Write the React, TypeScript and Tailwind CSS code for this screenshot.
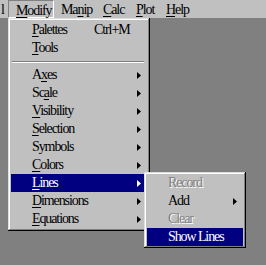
import React from 'react';

type Item = {
  label: string;
  ul?: number;
  shortcut?: string;
  sub?: boolean;
  active?: boolean;
  disabled?: boolean;
  sep?: boolean;
};

const mainItems: Item[] = [
  { label: 'Palettes', ul: 0, shortcut: 'Ctrl+M' },
  { label: 'Tools', ul: 0 },
  { label: '', sep: true },
  { label: 'Axes', ul: 1, sub: true },
  { label: 'Scale', ul: 2, sub: true },
  { label: 'Visibility', ul: 0, sub: true },
  { label: 'Selection', ul: 0, sub: true },
  { label: 'Symbols', sub: true },
  { label: 'Colors', ul: 0, sub: true },
  { label: 'Lines', ul: 0, sub: true, active: true },
  { label: 'Dimensions', ul: 0, sub: true },
  { label: 'Equations', ul: 0, sub: true },
];

const subItems: Item[] = [
  { label: 'Record', disabled: true },
  { label: 'Add', sub: true },
  { label: 'Clear', disabled: true },
  { label: 'Show Lines', active: true },
];

const Label = ({ text, ul }: { text: string; ul?: number }) => {
  if (ul === undefined) return <>{text}</>;
  return (
    <>
      {text.slice(0, ul)}
      <span className="underline decoration-1 underline-offset-[2px]">{text[ul]}</span>
      {text.slice(ul + 1)}
    </>
  );
};

const Arrow = ({ white }: { white?: boolean }) => (
  <svg width="4" height="7" viewBox="0 0 4 7" className="ml-auto">
    <path d="M0 0L4 3.5L0 7Z" fill={white ? '#fff' : '#000'} />
  </svg>
);

const bevel =
  'shadow-[inset_-1px_-1px_0_#000,inset_1px_1px_0_#dfdfdf,inset_-2px_-2px_0_#808080,inset_2px_2px_0_#fff]';

const Row = ({ item, pr }: { item: Item; pr: string }) => {
  if (item.sep) {
    return (
      <div className="h-[9px] flex items-center pl-[1px] pr-[1px]">
        <div className="w-full h-[2px] border-t border-t-[#808080] border-b border-b-white" />
      </div>
    );
  }
  return (
    <div
      className={`h-[18px] flex items-center pl-[21px] ${pr} ${
        item.active ? 'bg-[#000080] text-white' : item.disabled ? 'text-[#808080] [text-shadow:1px_1px_0_#fff]' : 'text-black'
      }`}
    >
      <span className="w-[62px] whitespace-nowrap">
        <Label text={item.label} ul={item.ul} />
      </span>
      {item.shortcut && <span className="whitespace-nowrap">{item.shortcut}</span>}
      {item.sub && <Arrow white={item.active} />}
    </div>
  );
};

export default function App() {
  return (
    <div className="relative w-[266px] h-[265px] overflow-hidden bg-[#808080] font-['Liberation_Serif',serif] text-[14px] tracking-[-1.1px] leading-none">
      <div className="h-[18px] bg-[#c0c0c0] flex items-stretch">
        <div className="w-[8px] pl-[1px] pt-[3px]">l</div>
        <div className="w-[46px] pl-[7px] pt-[3px] border-t border-l border-t-[#808080] border-l-[#808080] border-b border-r border-b-white border-r-white">
          <Label text="Modify" ul={0} />
        </div>
        <div className="w-[43px] pl-[7px] pt-[3px]">
          <Label text="Manip" ul={2} />
        </div>
        <div className="w-[33px] pl-[6px] pt-[3px]">
          <Label text="Calc" ul={0} />
        </div>
        <div className="w-[30px] pl-[6px] pt-[3px]">
          <Label text="Plot" ul={0} />
        </div>
        <div className="w-[30px] pl-[6px] pt-[3px]">
          <Label text="Help" ul={0} />
        </div>
      </div>

      <div className={`absolute left-[8px] top-[18px] w-[142px] bg-[#c0c0c0] pt-[3px] pb-[3px] pl-[3px] pr-[5px] ${bevel}`}>
        {mainItems.map((it, i) => (
          <Row key={i} item={it} pr="pr-[4px]" />
        ))}
      </div>

      <div className={`absolute left-[144px] top-[172px] w-[102px] bg-[#c0c0c0] py-[2px] px-[3px] ${bevel}`}>
        {subItems.map((it, i) => (
          <Row key={i} item={it} pr="pr-[6px]" />
        ))}
      </div>
    </div>
  );
}
